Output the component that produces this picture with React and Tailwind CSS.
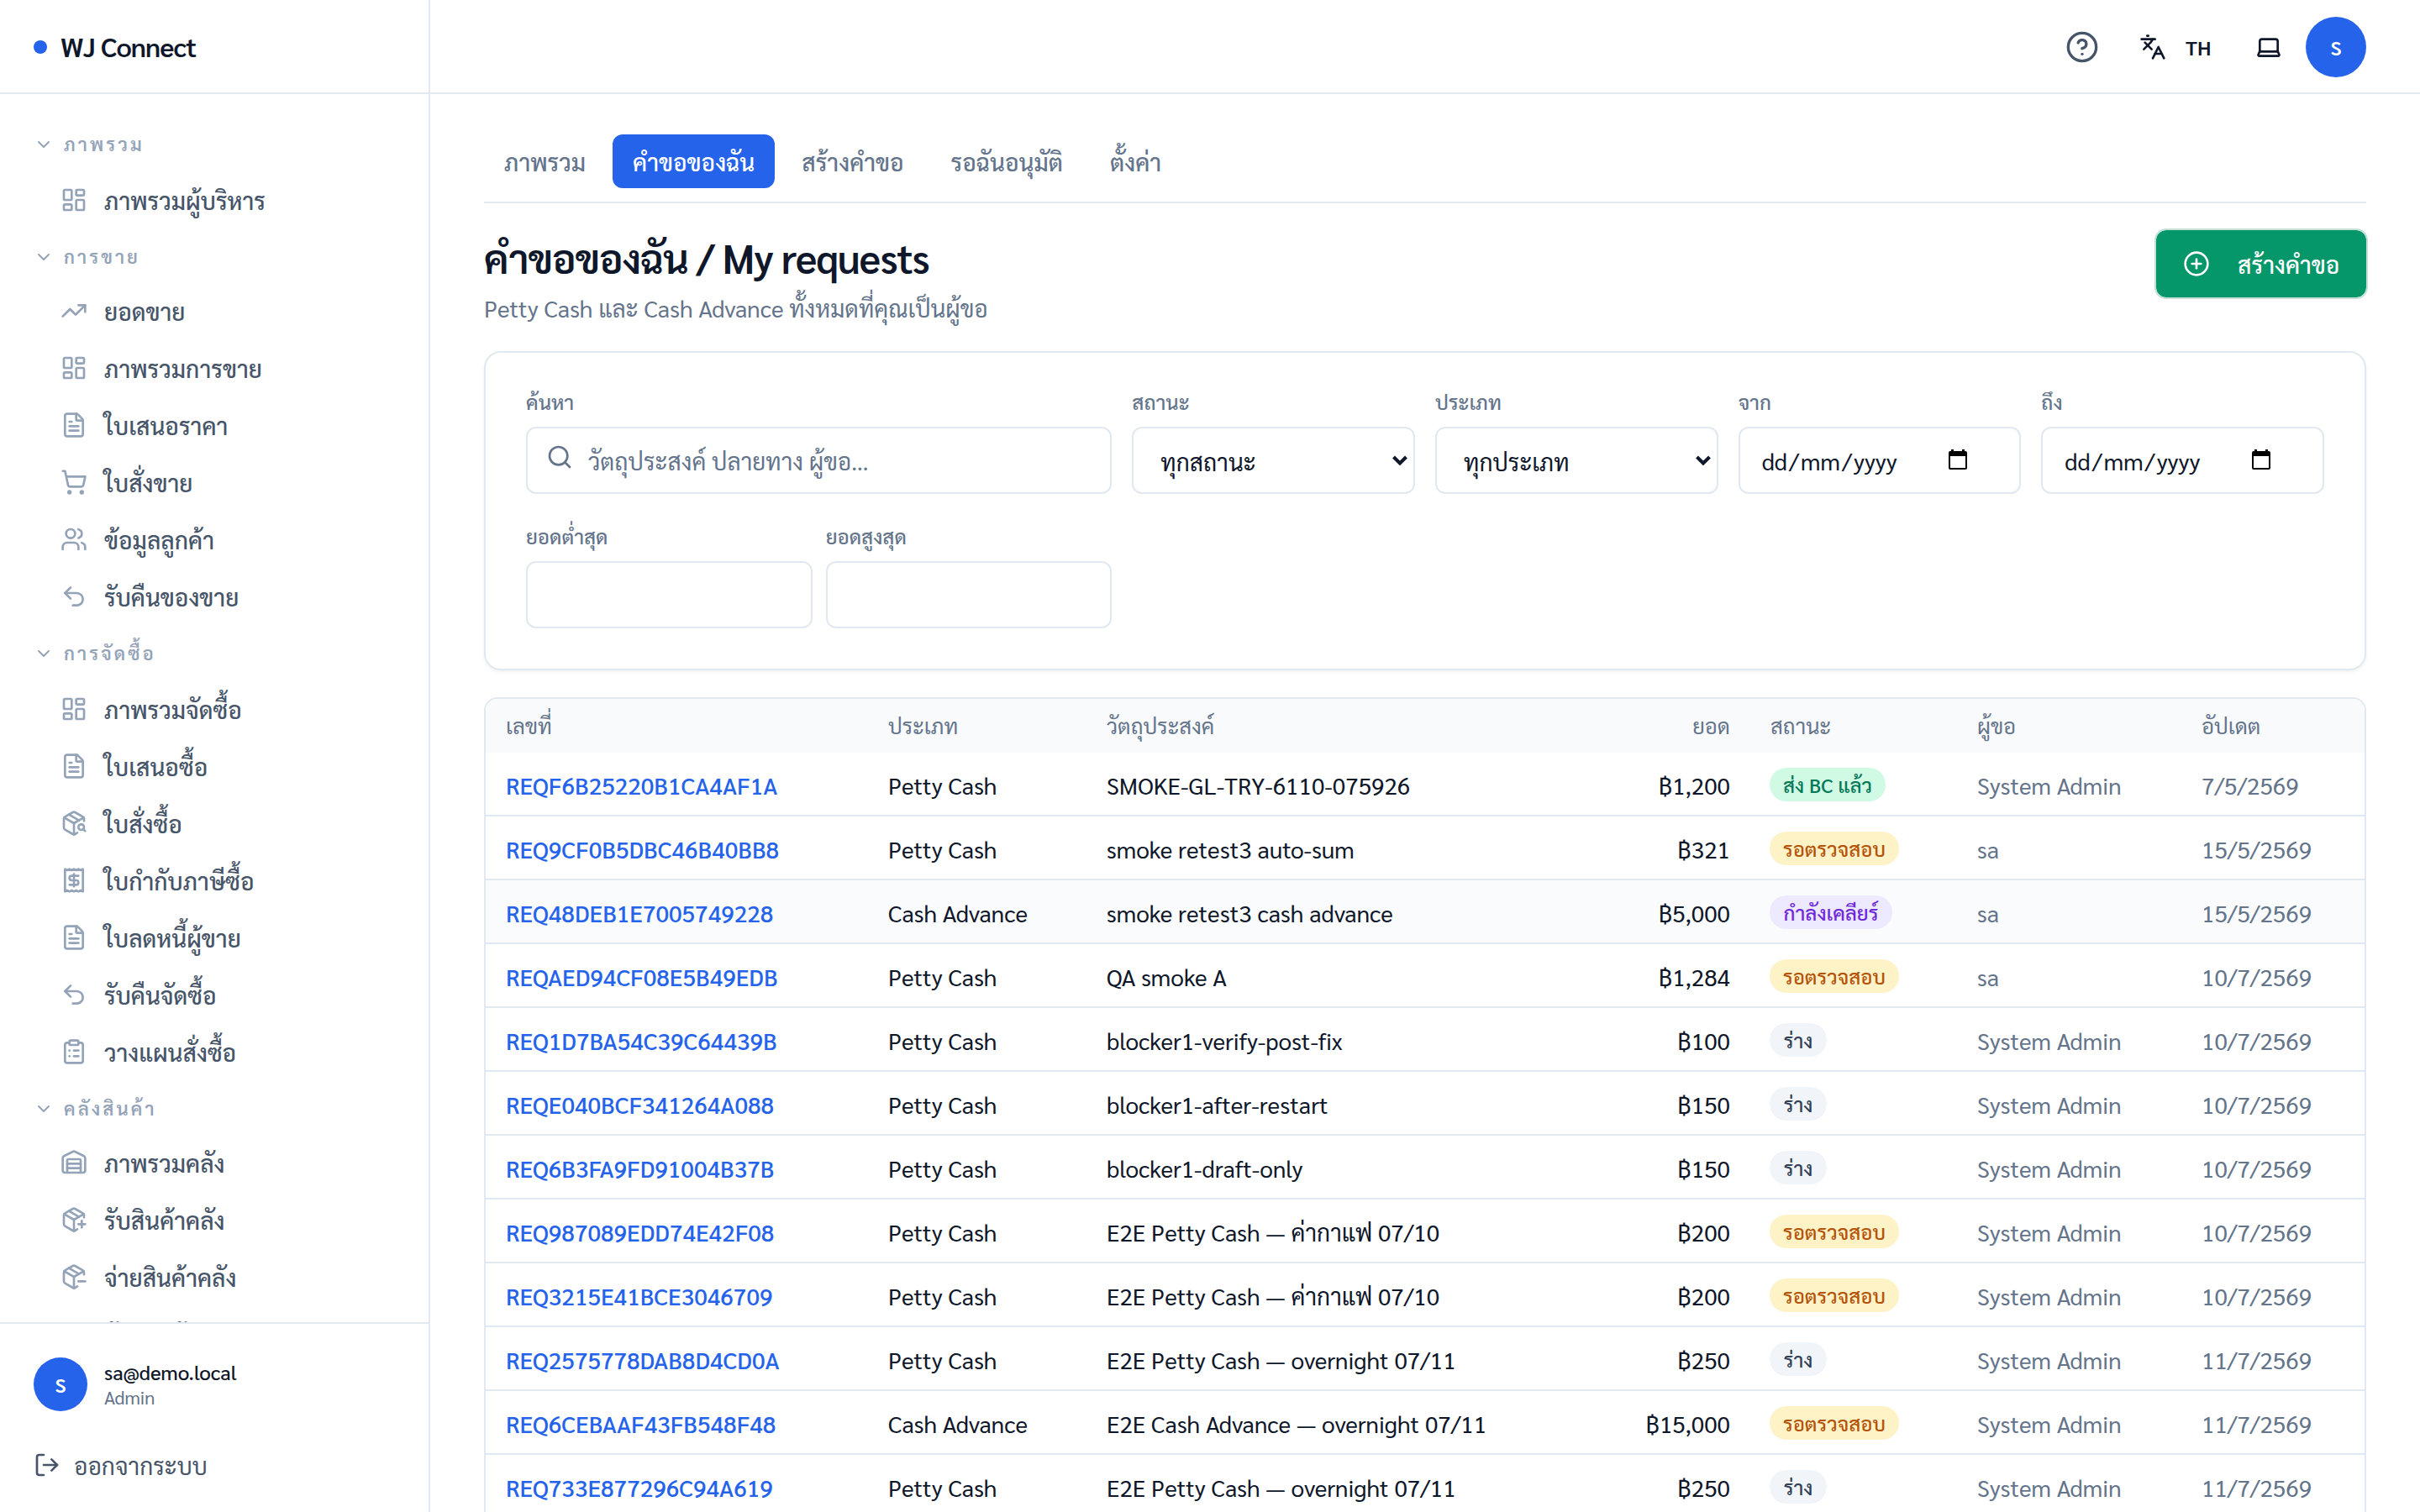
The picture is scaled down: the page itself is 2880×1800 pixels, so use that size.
import { useState } from "react";
import clsx from "clsx";
import {
    ChevronDown, CircleHelp, CirclePlus, ClipboardList, FileText, Languages, Laptop, LayoutDashboard, LogOut,
    PackageMinus, PackagePlus, PackageSearch, Search, ShoppingCart, TrendingUp, Undo2, Users, Warehouse,
} from "lucide-react";

// Receipt with a torn edge and a dollar sign
function ReceiptIcon({ className, strokeWidth }) {
    return (
        <svg className={className} viewBox="0 0 24 24" fill="none" stroke="currentColor" strokeWidth={strokeWidth} strokeLinecap="round" strokeLinejoin="round">
            <path d="M4 2v20l2-1 2 1 2-1 2 1 2-1 2 1 2-1 2 1V2l-2 1-2-1-2 1-2-1-2 1-2-1-2 1Z" />
            <path d="M16 8h-6a2 2 0 1 0 0 4h4a2 2 0 1 1 0 4H8" />
            <path d="M12 17.5v-11" />
        </svg>
    );
}

const navGroups = [
    {
        title: "ภาพรวม",
        headClass: "h-[66px] pt-0.5",
        items: [{ label: "ภาพรวมผู้บริหาร", icon: LayoutDashboard }],
    },
    {
        title: "การขาย",
        headClass: "h-16 pt-1",
        items: [
            { label: "ยอดขาย", icon: TrendingUp },
            { label: "ภาพรวมการขาย", icon: LayoutDashboard },
            { label: "ใบเสนอราคา", icon: FileText },
            { label: "ใบสั่งขาย", icon: ShoppingCart },
            { label: "ข้อมูลลูกค้า", icon: Users },
            { label: "รับคืนของขาย", icon: Undo2 },
        ],
    },
    {
        title: "การจัดซื้อ",
        headClass: "h-[66px] pt-0.5",
        items: [
            { label: "ภาพรวมจัดซื้อ", icon: LayoutDashboard },
            { label: "ใบเสนอซื้อ", icon: FileText },
            { label: "ใบสั่งซื้อ", icon: PackageSearch },
            { label: "ใบกำกับภาษีซื้อ", icon: ReceiptIcon },
            { label: "ใบลดหนี้ผู้ขาย", icon: FileText },
            { label: "รับคืนจัดซื้อ", icon: Undo2 },
            { label: "วางแผนสั่งซื้อ", icon: ClipboardList },
        ],
    },
    {
        title: "คลังสินค้า",
        headClass: "h-16 pt-[3px]",
        items: [
            { label: "ภาพรวมคลัง", icon: Warehouse },
            { label: "รับสินค้าคลัง", icon: PackagePlus },
            { label: "จ่ายสินค้าคลัง", icon: PackageMinus },
            { label: "ย้ายสินค้า", icon: Undo2 },
        ],
    },
];

const tabs = ["ภาพรวม", "คำขอของฉัน", "สร้างคำขอ", "รอฉันอนุมัติ", "ตั้งค่า"];

const statuses = {
    sent: { label: "ส่ง BC แล้ว", className: "w-[138px] bg-[#d1fae5] text-[#047857]" },
    review: { label: "รอตรวจสอบ", className: "w-[154px] bg-[#fef3c7] text-[#b45309]" },
    clearing: { label: "กำลังเคลียร์", className: "w-[146px] bg-[#ede9fe] text-[#6d28d9]" },
    draft: { label: "ร่าง", className: "w-[68px] bg-[#f1f5f9] text-[#334155]" },
};

const requests = [
    { id: "REQF6B25220B1CA4AF1A", type: "Petty Cash", purpose: "SMOKE-GL-TRY-6110-075926", amount: "฿1,200", status: "sent", by: "System Admin", date: "7/5/2569" },
    { id: "REQ9CF0B5DBC46B40BB8", type: "Petty Cash", purpose: "smoke retest3 auto-sum", amount: "฿321", status: "review", by: "sa", date: "15/5/2569" },
    { id: "REQ48DEB1E7005749228", type: "Cash Advance", purpose: "smoke retest3 cash advance", amount: "฿5,000", status: "clearing", by: "sa", date: "15/5/2569", active: true },
    { id: "REQAED94CF08E5B49EDB", type: "Petty Cash", purpose: "QA smoke A", amount: "฿1,284", status: "review", by: "sa", date: "10/7/2569" },
    { id: "REQ1D7BA54C39C64439B", type: "Petty Cash", purpose: "blocker1-verify-post-fix", amount: "฿100", status: "draft", by: "System Admin", date: "10/7/2569" },
    { id: "REQE040BCF341264A088", type: "Petty Cash", purpose: "blocker1-after-restart", amount: "฿150", status: "draft", by: "System Admin", date: "10/7/2569" },
    { id: "REQ6B3FA9FD91004B37B", type: "Petty Cash", purpose: "blocker1-draft-only", amount: "฿150", status: "draft", by: "System Admin", date: "10/7/2569" },
    { id: "REQ987089EDD74E42F08", type: "Petty Cash", purpose: "E2E Petty Cash — ค่ากาแฟ 07/10", amount: "฿200", status: "review", by: "System Admin", date: "10/7/2569" },
    { id: "REQ3215E41BCE3046709", type: "Petty Cash", purpose: "E2E Petty Cash — ค่ากาแฟ 07/10", amount: "฿200", status: "review", by: "System Admin", date: "10/7/2569" },
    { id: "REQ2575778DAB8D4CD0A", type: "Petty Cash", purpose: "E2E Petty Cash — overnight 07/11", amount: "฿250", status: "draft", by: "System Admin", date: "11/7/2569" },
    { id: "REQ6CEBAAF43FB548F48", type: "Cash Advance", purpose: "E2E Cash Advance — overnight 07/11", amount: "฿15,000", status: "review", by: "System Admin", date: "11/7/2569" },
    { id: "REQ733E877296C94A619", type: "Petty Cash", purpose: "E2E Petty Cash — overnight 07/11", amount: "฿250", status: "draft", by: "System Admin", date: "11/7/2569" },
];

function Sidebar() {
    return (
        <aside className="flex h-full w-[512px] shrink-0 flex-col border-r-2 border-[#e2e8f0]">
            <div className="flex h-[112px] shrink-0 items-center gap-4 border-b-2 border-[#e2e8f0] pl-10">
                <span className="mt-0.5 size-4 rounded-full bg-[#2563eb]" />
                <span className="text-[32px] leading-none font-semibold tracking-[-0.8px] text-[#0f172a]">WJ Connect</span>
            </div>

            {/* Navigation */}
            <nav className="min-h-0 flex-1 overflow-hidden pt-[26px] pl-10">
                {navGroups.map((group) => (
                    <div key={group.title}>
                        <div className={clsx("flex items-center gap-3 text-[#94a3b8]", group.headClass)}>
                            <ChevronDown className="size-6" strokeWidth={2} />
                            <span className="pb-0.5 text-[22px] leading-none font-semibold tracking-[3.1px] whitespace-nowrap">{group.title}</span>
                        </div>
                        {group.items.map(({ label, icon: Icon }) => (
                            <div key={label} className="flex h-[68px] items-center gap-5 pl-8">
                                <Icon className="size-8 shrink-0 text-[#94a3b8]" strokeWidth={2} />
                                <span className="text-[28px] leading-none font-medium whitespace-nowrap text-[#475569]">{label}</span>
                            </div>
                        ))}
                    </div>
                ))}
            </nav>

            {/* Signed in user */}
            <div className="flex h-[226px] shrink-0 flex-col border-t-2 border-[#e2e8f0] pt-10 pl-10">
                <div className="flex h-16 items-center gap-5">
                    <div className="flex size-16 items-center justify-center rounded-full bg-[#2563eb] text-[24px] font-semibold text-white">S</div>
                    <div className="flex flex-col">
                        <span className="text-[24px] leading-[30px] font-medium text-[#0f172a]">sa@demo.local</span>
                        <span className="text-[22px] leading-[30px] text-[#64748b]">Admin</span>
                    </div>
                </div>
                <div className="mt-12 flex h-8 items-center gap-4 text-[#475569]">
                    <LogOut className="size-8" strokeWidth={2} />
                    <span className="text-[28px] leading-none">ออกจากระบบ</span>
                </div>
            </div>
        </aside>
    );
}

function Topbar() {
    return (
        <header className="flex h-[112px] shrink-0 items-center justify-end border-b-2 border-[#e2e8f0] pt-0.5 pr-16 text-[#0f172a]">
            <CircleHelp className="size-10 text-[#475569]" strokeWidth={2} />
            <Languages className="ml-12 size-8" strokeWidth={2} />
            <span className="ml-[23px] w-[31px] text-[24px] leading-none font-semibold">TH</span>
            <Laptop className="ml-[52px] size-8" strokeWidth={2} />
            <div className="ml-7 flex size-[72px] items-center justify-center rounded-full bg-[#2563eb] text-[24px] font-semibold text-white">S</div>
        </header>
    );
}

function Field({ label, className, children }) {
    return (
        <div className={clsx("flex h-[136px] flex-col justify-between", className)}>
            <span className="pt-[14px] text-[24px] leading-[24px] font-medium text-[#64748b]">{label}</span>
            <div className="flex h-20 items-center rounded-xl border-2 border-[#e2e8f0] bg-white text-[28px] leading-none">
                {children}
            </div>
        </div>
    );
}

function SelectValue({ children }) {
    return (
        <div className="flex w-full items-center justify-between pr-[7px] pl-8 text-[#0f172a]">
            <span className="pt-px">{children}</span>
            <svg className="h-3 w-[18px]" viewBox="0 0 18 12" fill="none" stroke="currentColor" strokeWidth="4">
                <path d="M1.5 2 9 9.5 16.5 2" />
            </svg>
        </div>
    );
}

function DateValue() {
    return (
        <div className="flex w-full items-center justify-between pr-[62px] pl-[26px] text-[#0f172a]">
            <span>
                dd<span className="mx-[2.2px]">/</span>mm<span className="mx-[2.2px]">/</span>yyyy
            </span>
            <svg className="mb-0.5 h-6 w-[22px]" viewBox="0 0 22 24" fill="black">
                <path fillRule="evenodd" d="M3 0h3v2h10V0h3v2h1a2 2 0 0 1 2 2v18a2 2 0 0 1-2 2H2a2 2 0 0 1-2-2V4a2 2 0 0 1 2-2h1ZM2 8v14h18V8Z" />
            </svg>
        </div>
    );
}

function Filters() {
    return (
        <section className="mt-[30px] grid h-[380px] grid-cols-6 content-start gap-6 rounded-[20px] border-2 border-[#e2e8f0] px-12 pt-8 shadow-[0_2px_4px_rgba(15,23,42,0.06)]">
            <Field label="ค้นหา" className="col-span-2">
                <Search className="mb-2 ml-[22px] size-8 text-[#64748b]" strokeWidth={2} />
                <span className="ml-[18px] text-[#64748b]">วัตถุประสงค์ ปลายทาง ผู้ขอ…</span>
            </Field>
            <Field label="สถานะ"><SelectValue>ทุกสถานะ</SelectValue></Field>
            <Field label="ประเภท"><SelectValue>ทุกประเภท</SelectValue></Field>
            <Field label="จาก"><DateValue /></Field>
            <Field label="ถึง"><DateValue /></Field>
            <div className="col-span-2 grid grid-cols-2 gap-4">
                <Field label="ยอดต่ำสุด" />
                <Field label="ยอดสูงสุด" />
            </div>
        </section>
    );
}

function RequestsTable() {
    return (
        <div className="mt-8 overflow-hidden rounded-t-2xl border-2 border-b-0 border-[#e2e8f0]">
            <table className="w-full table-fixed border-separate border-spacing-0 text-left text-[28px] leading-none whitespace-nowrap text-[#0f172a]">
                <colgroup>
                    <col className="w-[455px]" />
                    <col className="w-[260px]" />
                    <col className="w-[641px]" />
                    <col className="w-[149px]" />
                    <col className="w-[246px]" />
                    <col className="w-[267px]" />
                    <col className="w-[218px]" />
                </colgroup>
                <thead>
                    <tr className="h-16 bg-[#f8fafc] text-[25.6px] text-[#64748b] [&>th]:px-6 [&>th]:font-normal">
                        <th>เลขที่</th>
                        <th>ประเภท</th>
                        <th>วัตถุประสงค์</th>
                        <th className="text-right">ยอด</th>
                        <th>สถานะ</th>
                        <th>ผู้ขอ</th>
                        <th>อัปเดต</th>
                    </tr>
                </thead>
                <tbody>
                    {requests.map((r) => (
                        <tr
                            key={r.id}
                            className={clsx("h-[76px] [&>td]:border-b-2 [&>td]:border-[#e2e8f0] [&>td]:px-6 [&>td]:pt-0.5 [&>td]:pb-0", r.active && "bg-[#fafbfd]")}
                        >
                            <td className="font-medium text-[#2563eb]">{r.id}</td>
                            <td>{r.type}</td>
                            <td>{r.purpose}</td>
                            <td className="text-right">{r.amount}</td>
                            <td>
                                <span className={clsx("-ml-px flex h-10 items-center justify-center rounded-full text-[24px] font-medium", statuses[r.status].className)}>
                                    {statuses[r.status].label}
                                </span>
                            </td>
                            <td className="text-[#64748b]">{r.by}</td>
                            <td className="text-[#64748b]">{r.date}</td>
                        </tr>
                    ))}
                </tbody>
            </table>
        </div>
    );
}

function App() {
    const [activeTab, setActiveTab] = useState(1);

    return (
        <div className="flex h-[1800px] w-[2880px] overflow-hidden bg-white font-['Sarabun','Noto_Sans','Noto_Sans_Thai',sans-serif]">
            <Sidebar />
            <div className="flex min-w-0 flex-1 flex-col overflow-hidden">
                <Topbar />
                <main className="flex-1 overflow-hidden px-16 pt-12">
                    {/* Tabs */}
                    <div className="flex h-[82px] items-start gap-2 border-b-2 border-[#e2e8f0]">
                        {tabs.map((tab, index) => (
                            <button
                                key={tab}
                                onClick={() => setActiveTab(index)}
                                className={clsx(
                                    "h-16 rounded-xl px-6 text-[28px] leading-none font-medium whitespace-nowrap",
                                    index === activeTab ? "bg-[#2563eb] text-white" : "text-[#64748b]"
                                )}
                            >
                                {tab}
                            </button>
                        ))}
                    </div>

                    {/* Page heading */}
                    <div className="mt-8 flex h-[114px] items-start justify-between">
                        <div className="pt-1">
                            <h1 className="text-[48px] leading-[56px] font-semibold tracking-[-1.2px] whitespace-nowrap text-[#0f172a]">คำขอของฉัน / My requests</h1>
                            <p className="mt-3 text-[28px] leading-10 whitespace-nowrap text-[#64748b]">Petty Cash และ Cash Advance ทั้งหมดที่คุณเป็นผู้ขอ</p>
                        </div>
                        <button className="-mt-0.5 -mr-0.5 flex h-[84px] w-[254px] items-center rounded-[14px] border-2 border-[#c3e0d6] bg-[#059669] bg-clip-padding pl-8 text-white">
                            <CirclePlus className="size-8" strokeWidth={2} />
                            <span className="ml-[33px] text-[28px] leading-none font-medium whitespace-nowrap">สร้างคำขอ</span>
                        </button>
                    </div>

                    <Filters />
                    <RequestsTable />
                </main>
            </div>
        </div>
    );
}

export default App;
